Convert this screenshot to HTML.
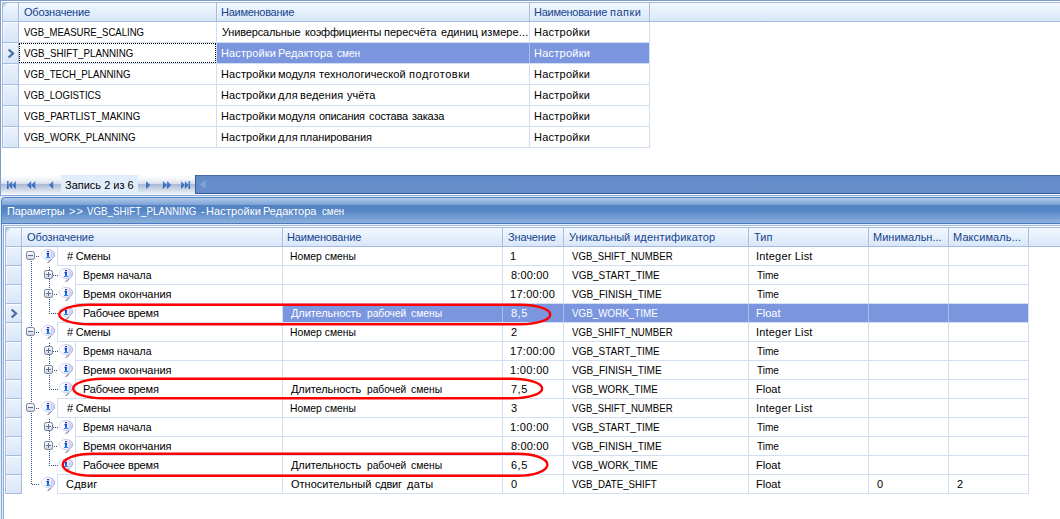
<!DOCTYPE html>
<html lang="ru"><head><meta charset="utf-8"><title>Параметры</title>
<style>
html,body{margin:0;padding:0;background:#fff}
body{width:1060px;height:519px;position:relative;overflow:hidden;font:11px/13px "Liberation Sans",sans-serif}
body>div,body>span,body>svg{position:absolute;display:block}
.t{white-space:nowrap;height:13px;transform-origin:0 0}
</style></head><body>
<div style="left:0px;top:0px;width:1px;height:196px;background:#7f9dc8;"></div>
<div style="left:0px;top:0px;width:1060px;height:1px;background:#7f9dc8;"></div>
<div style="left:0px;top:195px;width:1060px;height:1px;background:#8aa6d2;"></div>
<div style="left:2px;top:2px;width:1058px;height:1px;background:#a3bcdf;"></div>
<div style="left:2px;top:2px;width:1px;height:146px;background:#a3bcdf;"></div>
<div style="left:3px;top:3px;width:1057px;height:18px;background:linear-gradient(#f3f8fe 0%,#e6f0fc 45%,#d9e7fa 100%);"></div>
<div style="left:2px;top:21px;width:1058px;height:1px;background:#a3bcdf;"></div>
<div style="left:18px;top:3px;width:1px;height:18px;background:#a3bcdf;"></div>
<div style="left:19px;top:3px;width:1px;height:18px;background:rgba(255,255,255,.3);"></div>
<div style="left:216px;top:3px;width:1px;height:18px;background:#a3bcdf;"></div>
<div style="left:217px;top:3px;width:1px;height:18px;background:rgba(255,255,255,.3);"></div>
<div style="left:529px;top:3px;width:1px;height:18px;background:#a3bcdf;"></div>
<div style="left:530px;top:3px;width:1px;height:18px;background:rgba(255,255,255,.3);"></div>
<div style="left:649px;top:3px;width:1px;height:18px;background:#a3bcdf;"></div>
<div style="left:650px;top:3px;width:1px;height:18px;background:rgba(255,255,255,.3);"></div>
<div style="left:3px;top:3px;width:5px;height:5px;background:linear-gradient(135deg,#9db6dc 0%,rgba(157,182,220,0) 65%)"></div>
<div style="left:3px;top:22px;width:15px;height:20px;background:linear-gradient(#eaf2fc,#d9e6f8);box-shadow:inset 1px 1px 0 rgba(255,255,255,.6)"></div>
<div style="left:3px;top:42px;width:16px;height:1px;background:#a3bcdf;"></div>
<div style="left:19px;top:42px;width:631px;height:1px;background:#d2dff2;"></div>
<div style="left:3px;top:43px;width:15px;height:20px;background:linear-gradient(#eaf2fc,#d9e6f8);box-shadow:inset 1px 1px 0 rgba(255,255,255,.6)"></div>
<div style="left:3px;top:63px;width:16px;height:1px;background:#a3bcdf;"></div>
<div style="left:19px;top:63px;width:631px;height:1px;background:#d2dff2;"></div>
<div style="left:3px;top:64px;width:15px;height:20px;background:linear-gradient(#eaf2fc,#d9e6f8);box-shadow:inset 1px 1px 0 rgba(255,255,255,.6)"></div>
<div style="left:3px;top:84px;width:16px;height:1px;background:#a3bcdf;"></div>
<div style="left:19px;top:84px;width:631px;height:1px;background:#d2dff2;"></div>
<div style="left:3px;top:85px;width:15px;height:20px;background:linear-gradient(#eaf2fc,#d9e6f8);box-shadow:inset 1px 1px 0 rgba(255,255,255,.6)"></div>
<div style="left:3px;top:105px;width:16px;height:1px;background:#a3bcdf;"></div>
<div style="left:19px;top:105px;width:631px;height:1px;background:#d2dff2;"></div>
<div style="left:3px;top:106px;width:15px;height:20px;background:linear-gradient(#eaf2fc,#d9e6f8);box-shadow:inset 1px 1px 0 rgba(255,255,255,.6)"></div>
<div style="left:3px;top:126px;width:16px;height:1px;background:#a3bcdf;"></div>
<div style="left:19px;top:126px;width:631px;height:1px;background:#d2dff2;"></div>
<div style="left:3px;top:127px;width:15px;height:20px;background:linear-gradient(#eaf2fc,#d9e6f8);box-shadow:inset 1px 1px 0 rgba(255,255,255,.6)"></div>
<div style="left:3px;top:147px;width:16px;height:1px;background:#a3bcdf;"></div>
<div style="left:19px;top:147px;width:631px;height:1px;background:#d2dff2;"></div>
<div style="left:18px;top:22px;width:1px;height:126px;background:#a3bcdf;"></div>
<div style="left:216px;top:22px;width:1px;height:126px;background:#d2dff2;"></div>
<div style="left:529px;top:22px;width:1px;height:126px;background:#d2dff2;"></div>
<div style="left:649px;top:22px;width:1px;height:126px;background:#d2dff2;"></div>
<div style="left:217px;top:43px;width:432px;height:20px;background:#7b96df;"></div>
<div style="left:529px;top:43px;width:1px;height:20px;background:#aebdea;"></div>
<div style="left:19px;top:43px;width:197px;height:20px;box-sizing:border-box;border:1px dotted #000"></div>
<svg style="left:7px;top:48px" width="9" height="11" viewBox="0 0 9 11"><path d="M1.6 1.5 L6 5.5 L1.6 9.5" fill="none" stroke="#4a6da8" stroke-width="2.3"/></svg>
<span id="t1" class="t" style="left:24.00px;top:6px;color:#15428b;letter-spacing:-0.200px;">Обозначение</span>
<span id="t2" class="t" style="left:221.00px;top:6px;color:#15428b;letter-spacing:-0.273px;">Наименование</span>
<span id="t3" class="t" style="left:534.00px;top:6px;color:#15428b;letter-spacing:-0.273px;">Наименование</span>
<span id="t4" class="t" style="left:610.00px;top:6px;color:#15428b;letter-spacing:0.500px;">папки</span>
<span id="t5" class="t" style="left:24.00px;top:26px;color:#000;transform:scaleX(0.8686);">VGB_MEASURE_SCALING</span>
<span id="t6" class="t" style="left:222.00px;top:26px;color:#000;letter-spacing:-0.167px;">Универсальные</span>
<span id="t7" class="t" style="left:305.00px;top:26px;color:#000;letter-spacing:-0.182px;">коэффициенты</span>
<span id="t8" class="t" style="left:384.00px;top:26px;color:#000;">пересчёта</span>
<span id="t9" class="t" style="left:441.00px;top:26px;color:#000;">единиц</span>
<span id="t10" class="t" style="left:481.00px;top:26px;color:#000;letter-spacing:0.125px;">измере...</span>
<span id="t11" class="t" style="left:534.00px;top:26px;color:#000;letter-spacing:0.250px;">Настройки</span>
<span id="t12" class="t" style="left:24.00px;top:47px;color:#000;transform:scaleX(0.8852);">VGB_SHIFT_PLANNING</span>
<span id="t13" class="t" style="left:221.00px;top:47px;color:#fff;letter-spacing:0.125px;">Настройки</span>
<span id="t14" class="t" style="left:278.00px;top:47px;color:#fff;letter-spacing:0.125px;">Редактора</span>
<span id="t15" class="t" style="left:337.00px;top:47px;color:#fff;transform:scaleX(0.9167);">смен</span>
<span id="t16" class="t" style="left:534.00px;top:47px;color:#fff;letter-spacing:0.250px;">Настройки</span>
<span id="t17" class="t" style="left:24.00px;top:68px;color:#000;transform:scaleX(0.8750);">VGB_TECH_PLANNING</span>
<span id="t18" class="t" style="left:221.00px;top:68px;color:#000;letter-spacing:0.125px;">Настройки</span>
<span id="t19" class="t" style="left:278.00px;top:68px;color:#000;">модуля</span>
<span id="t20" class="t" style="left:319.00px;top:68px;color:#000;letter-spacing:0.071px;">технологической</span>
<span id="t21" class="t" style="left:409.00px;top:68px;color:#000;letter-spacing:0.556px;">подготовки</span>
<span id="t22" class="t" style="left:534.00px;top:68px;color:#000;letter-spacing:0.250px;">Настройки</span>
<span id="t23" class="t" style="left:24.00px;top:89px;color:#000;transform:scaleX(0.8736);">VGB_LOGISTICS</span>
<span id="t24" class="t" style="left:221.00px;top:89px;color:#000;letter-spacing:0.125px;">Настройки</span>
<span id="t25" class="t" style="left:278.00px;top:89px;color:#000;letter-spacing:0.500px;">для</span>
<span id="t26" class="t" style="left:300.00px;top:89px;color:#000;letter-spacing:0.167px;">ведения</span>
<span id="t27" class="t" style="left:347.00px;top:89px;color:#000;">учёта</span>
<span id="t28" class="t" style="left:534.00px;top:89px;color:#000;letter-spacing:0.250px;">Настройки</span>
<span id="t29" class="t" style="left:24.00px;top:110px;color:#000;transform:scaleX(0.8915);">VGB_PARTLIST_MAKING</span>
<span id="t30" class="t" style="left:221.00px;top:110px;color:#000;letter-spacing:0.125px;">Настройки</span>
<span id="t31" class="t" style="left:278.00px;top:110px;color:#000;">модуля</span>
<span id="t32" class="t" style="left:319.00px;top:110px;color:#000;letter-spacing:-0.286px;">описания</span>
<span id="t33" class="t" style="left:369.00px;top:110px;color:#000;letter-spacing:-0.167px;">состава</span>
<span id="t34" class="t" style="left:412.00px;top:110px;color:#000;letter-spacing:-0.200px;">заказа</span>
<span id="t35" class="t" style="left:534.00px;top:110px;color:#000;letter-spacing:0.250px;">Настройки</span>
<span id="t36" class="t" style="left:24.00px;top:131px;color:#000;transform:scaleX(0.8871);">VGB_WORK_PLANNING</span>
<span id="t37" class="t" style="left:221.00px;top:131px;color:#000;letter-spacing:0.125px;">Настройки</span>
<span id="t38" class="t" style="left:278.00px;top:131px;color:#000;letter-spacing:0.500px;">для</span>
<span id="t39" class="t" style="left:300.00px;top:131px;color:#000;letter-spacing:-0.091px;">планирования</span>
<span id="t40" class="t" style="left:534.00px;top:131px;color:#000;letter-spacing:0.250px;">Настройки</span>
<div style="left:1px;top:175px;width:194px;height:19px;background:linear-gradient(#ffffff 0px,#f3f5fa 4px,#dde3ef 8px,#d3dbe9 9px,#a9bbd6 9px,#b3c2d9 11px,#d2dae8 15px,#f0f3f8 19px);"></div>
<div style="left:61px;top:175px;width:77px;height:19px;background:#e2edfb;"></div>
<span id="t41" class="t" style="left:65.00px;top:179px;color:#000;">Запись 2 из 6</span>
<svg style="left:6px;top:180px" width="12" height="10" viewBox="0 0 12 10" fill="url(#ng)"><defs><linearGradient id="ng" x1="0" y1="0" x2="0" y2="1"><stop offset="0" stop-color="#5589d2"/><stop offset="1" stop-color="#2c5fae"/></linearGradient></defs><rect x="1" y="1" width="1.6" height="8"/><path d="M6.1 1 L2.4 5 L6.1 9Z"/><path d="M9.9 1 L6.1 5 L9.9 9Z"/></svg>
<svg style="left:26px;top:180px" width="12" height="10" viewBox="0 0 12 10" fill="url(#ng)"><defs><linearGradient id="ng" x1="0" y1="0" x2="0" y2="1"><stop offset="0" stop-color="#5589d2"/><stop offset="1" stop-color="#2c5fae"/></linearGradient></defs><path d="M5.2 1 L1 5 L5.2 9Z"/><path d="M9.3 1 L5.1 5 L9.3 9Z"/></svg>
<svg style="left:47px;top:180px" width="12" height="10" viewBox="0 0 12 10" fill="url(#ng)"><defs><linearGradient id="ng" x1="0" y1="0" x2="0" y2="1"><stop offset="0" stop-color="#5589d2"/><stop offset="1" stop-color="#2c5fae"/></linearGradient></defs><path d="M6.2 1 L1.9 5 L6.2 9Z"/></svg>
<svg style="left:144px;top:180px" width="12" height="10" viewBox="0 0 12 10" fill="url(#ng)"><defs><linearGradient id="ng" x1="0" y1="0" x2="0" y2="1"><stop offset="0" stop-color="#5589d2"/><stop offset="1" stop-color="#2c5fae"/></linearGradient></defs><path d="M2 1 L6.3 5 L2 9Z"/></svg>
<svg style="left:161px;top:180px" width="12" height="10" viewBox="0 0 12 10" fill="url(#ng)"><defs><linearGradient id="ng" x1="0" y1="0" x2="0" y2="1"><stop offset="0" stop-color="#5589d2"/><stop offset="1" stop-color="#2c5fae"/></linearGradient></defs><path d="M1.9 1 L6.1 5 L1.9 9Z"/><path d="M6 1 L10.2 5 L6 9Z"/></svg>
<svg style="left:179px;top:180px" width="12" height="10" viewBox="0 0 12 10" fill="url(#ng)"><defs><linearGradient id="ng" x1="0" y1="0" x2="0" y2="1"><stop offset="0" stop-color="#5589d2"/><stop offset="1" stop-color="#2c5fae"/></linearGradient></defs><path d="M2.1 1 L5.9 5 L2.1 9Z"/><path d="M5.9 1 L9.6 5 L5.9 9Z"/><rect x="9.5" y="1" width="1.6" height="8"/></svg>
<div style="left:195px;top:175px;width:865px;height:19px;background:linear-gradient(#5d88c5,#668ec9 40%,#648cc8);"></div>
<div style="left:195px;top:175px;width:865px;height:1px;background:#4169ab;"></div>
<div style="left:195px;top:175px;width:1px;height:19px;background:#325a9c;"></div>
<div style="left:195px;top:193px;width:865px;height:1px;background:#325a9c;"></div>
<svg style="left:199px;top:179px" width="8" height="11" viewBox="0 0 8 11"><path d="M6.6 1 L1 5.5 L6.6 10Z" fill="#82a3d5"/></svg>
<div style="left:0px;top:196px;width:1060px;height:1px;background:#e0eaf8;"></div>
<div style="left:1px;top:197px;width:1059px;height:27px;background:linear-gradient(#b1c9e8 0px,#7aa1d6 7px,#5182c3 7px,#5786c6 13px,#8db1dd 25px,#4a7cc0 25px,#4a7cc0 26px);box-sizing:border-box;border-left:1px solid #4f81c5;border-top:1px solid #4f81c5;border-top-left-radius:4px"></div>
<div style="left:0px;top:196px;width:1px;height:323px;background:#e0eaf8;"></div>
<div style="left:1px;top:224px;width:1px;height:295px;background:linear-gradient(#5f8ecd,#8fb0dc);"></div>
<span id="t42" class="t" style="left:7.00px;top:205px;color:#fff;letter-spacing:-0.125px;">Параметры</span>
<span id="t43" class="t" style="left:69.00px;top:205px;color:#fff;letter-spacing:1.000px;">&gt;&gt;</span>
<span id="t44" class="t" style="left:87.00px;top:205px;color:#fff;transform:scaleX(0.8852);">VGB_SHIFT_PLANNING</span>
<span id="t45" class="t" style="left:201.00px;top:205px;color:#fff;">-</span>
<span id="t46" class="t" style="left:206.00px;top:205px;color:#fff;letter-spacing:0.125px;">Настройки</span>
<span id="t47" class="t" style="left:263.00px;top:205px;color:#fff;">Редактора</span>
<span id="t48" class="t" style="left:322.00px;top:205px;color:#fff;transform:scaleX(0.8750);">смен</span>
<div style="left:2px;top:224px;width:1px;height:295px;background:#dde8f8;"></div>
<div style="left:2px;top:224px;width:1058px;height:1px;background:#e4edfa;"></div>
<div style="left:3px;top:225px;width:1057px;height:1px;background:#a3bcdf;"></div>
<div style="left:3px;top:225px;width:1px;height:294px;background:#93abd0;"></div>
<div style="left:5px;top:227px;width:1055px;height:1px;background:#a3bcdf;"></div>
<div style="left:5px;top:227px;width:1px;height:267px;background:#a3bcdf;"></div>
<div style="left:6px;top:228px;width:1054px;height:18px;background:linear-gradient(#f3f8fe 0%,#e6f0fc 45%,#d9e7fa 100%);"></div>
<div style="left:5px;top:246px;width:1055px;height:1px;background:#a3bcdf;"></div>
<div style="left:21px;top:228px;width:1px;height:18px;background:#a3bcdf;"></div>
<div style="left:22px;top:228px;width:1px;height:18px;background:rgba(255,255,255,.3);"></div>
<div style="left:282px;top:228px;width:1px;height:18px;background:#a3bcdf;"></div>
<div style="left:283px;top:228px;width:1px;height:18px;background:rgba(255,255,255,.3);"></div>
<div style="left:502px;top:228px;width:1px;height:18px;background:#a3bcdf;"></div>
<div style="left:503px;top:228px;width:1px;height:18px;background:rgba(255,255,255,.3);"></div>
<div style="left:563px;top:228px;width:1px;height:18px;background:#a3bcdf;"></div>
<div style="left:564px;top:228px;width:1px;height:18px;background:rgba(255,255,255,.3);"></div>
<div style="left:748px;top:228px;width:1px;height:18px;background:#a3bcdf;"></div>
<div style="left:749px;top:228px;width:1px;height:18px;background:rgba(255,255,255,.3);"></div>
<div style="left:868px;top:228px;width:1px;height:18px;background:#a3bcdf;"></div>
<div style="left:869px;top:228px;width:1px;height:18px;background:rgba(255,255,255,.3);"></div>
<div style="left:948px;top:228px;width:1px;height:18px;background:#a3bcdf;"></div>
<div style="left:949px;top:228px;width:1px;height:18px;background:rgba(255,255,255,.3);"></div>
<div style="left:1028px;top:228px;width:1px;height:18px;background:#a3bcdf;"></div>
<div style="left:1029px;top:228px;width:1px;height:18px;background:rgba(255,255,255,.3);"></div>
<div style="left:6px;top:228px;width:5px;height:5px;background:linear-gradient(135deg,#9db6dc 0%,rgba(157,182,220,0) 65%)"></div>
<div style="left:6px;top:247px;width:15px;height:18px;background:linear-gradient(#eaf2fc,#d9e6f8);box-shadow:inset 1px 1px 0 rgba(255,255,255,.6)"></div>
<div style="left:6px;top:265px;width:16px;height:1px;background:#a3bcdf;"></div>
<div style="left:6px;top:266px;width:15px;height:18px;background:linear-gradient(#eaf2fc,#d9e6f8);box-shadow:inset 1px 1px 0 rgba(255,255,255,.6)"></div>
<div style="left:6px;top:284px;width:16px;height:1px;background:#a3bcdf;"></div>
<div style="left:6px;top:285px;width:15px;height:18px;background:linear-gradient(#eaf2fc,#d9e6f8);box-shadow:inset 1px 1px 0 rgba(255,255,255,.6)"></div>
<div style="left:6px;top:303px;width:16px;height:1px;background:#a3bcdf;"></div>
<div style="left:6px;top:304px;width:15px;height:18px;background:linear-gradient(#eaf2fc,#d9e6f8);box-shadow:inset 1px 1px 0 rgba(255,255,255,.6)"></div>
<div style="left:6px;top:322px;width:16px;height:1px;background:#a3bcdf;"></div>
<div style="left:6px;top:323px;width:15px;height:18px;background:linear-gradient(#eaf2fc,#d9e6f8);box-shadow:inset 1px 1px 0 rgba(255,255,255,.6)"></div>
<div style="left:6px;top:341px;width:16px;height:1px;background:#a3bcdf;"></div>
<div style="left:6px;top:342px;width:15px;height:18px;background:linear-gradient(#eaf2fc,#d9e6f8);box-shadow:inset 1px 1px 0 rgba(255,255,255,.6)"></div>
<div style="left:6px;top:360px;width:16px;height:1px;background:#a3bcdf;"></div>
<div style="left:6px;top:361px;width:15px;height:18px;background:linear-gradient(#eaf2fc,#d9e6f8);box-shadow:inset 1px 1px 0 rgba(255,255,255,.6)"></div>
<div style="left:6px;top:379px;width:16px;height:1px;background:#a3bcdf;"></div>
<div style="left:6px;top:380px;width:15px;height:18px;background:linear-gradient(#eaf2fc,#d9e6f8);box-shadow:inset 1px 1px 0 rgba(255,255,255,.6)"></div>
<div style="left:6px;top:398px;width:16px;height:1px;background:#a3bcdf;"></div>
<div style="left:6px;top:399px;width:15px;height:18px;background:linear-gradient(#eaf2fc,#d9e6f8);box-shadow:inset 1px 1px 0 rgba(255,255,255,.6)"></div>
<div style="left:6px;top:417px;width:16px;height:1px;background:#a3bcdf;"></div>
<div style="left:6px;top:418px;width:15px;height:18px;background:linear-gradient(#eaf2fc,#d9e6f8);box-shadow:inset 1px 1px 0 rgba(255,255,255,.6)"></div>
<div style="left:6px;top:436px;width:16px;height:1px;background:#a3bcdf;"></div>
<div style="left:6px;top:437px;width:15px;height:18px;background:linear-gradient(#eaf2fc,#d9e6f8);box-shadow:inset 1px 1px 0 rgba(255,255,255,.6)"></div>
<div style="left:6px;top:455px;width:16px;height:1px;background:#a3bcdf;"></div>
<div style="left:6px;top:456px;width:15px;height:18px;background:linear-gradient(#eaf2fc,#d9e6f8);box-shadow:inset 1px 1px 0 rgba(255,255,255,.6)"></div>
<div style="left:6px;top:474px;width:16px;height:1px;background:#a3bcdf;"></div>
<div style="left:6px;top:475px;width:15px;height:18px;background:linear-gradient(#eaf2fc,#d9e6f8);box-shadow:inset 1px 1px 0 rgba(255,255,255,.6)"></div>
<div style="left:6px;top:493px;width:16px;height:1px;background:#a3bcdf;"></div>
<div style="left:21px;top:247px;width:1px;height:247px;background:#a3bcdf;"></div>
<div style="left:57px;top:265px;width:972px;height:1px;background:#d2dff2;"></div>
<div style="left:57px;top:247px;width:1px;height:19px;background:#d2dff2;"></div>
<div style="left:75px;top:284px;width:954px;height:1px;background:#d2dff2;"></div>
<div style="left:75px;top:265px;width:1px;height:20px;background:#d2dff2;"></div>
<div style="left:75px;top:303px;width:954px;height:1px;background:#d2dff2;"></div>
<div style="left:75px;top:284px;width:1px;height:20px;background:#d2dff2;"></div>
<div style="left:57px;top:322px;width:972px;height:1px;background:#d2dff2;"></div>
<div style="left:75px;top:303px;width:1px;height:20px;background:#d2dff2;"></div>
<div style="left:57px;top:341px;width:972px;height:1px;background:#d2dff2;"></div>
<div style="left:57px;top:322px;width:1px;height:20px;background:#d2dff2;"></div>
<div style="left:75px;top:360px;width:954px;height:1px;background:#d2dff2;"></div>
<div style="left:75px;top:341px;width:1px;height:20px;background:#d2dff2;"></div>
<div style="left:75px;top:379px;width:954px;height:1px;background:#d2dff2;"></div>
<div style="left:75px;top:360px;width:1px;height:20px;background:#d2dff2;"></div>
<div style="left:57px;top:398px;width:972px;height:1px;background:#d2dff2;"></div>
<div style="left:75px;top:379px;width:1px;height:20px;background:#d2dff2;"></div>
<div style="left:57px;top:417px;width:972px;height:1px;background:#d2dff2;"></div>
<div style="left:57px;top:398px;width:1px;height:20px;background:#d2dff2;"></div>
<div style="left:75px;top:436px;width:954px;height:1px;background:#d2dff2;"></div>
<div style="left:75px;top:417px;width:1px;height:20px;background:#d2dff2;"></div>
<div style="left:75px;top:455px;width:954px;height:1px;background:#d2dff2;"></div>
<div style="left:75px;top:436px;width:1px;height:20px;background:#d2dff2;"></div>
<div style="left:57px;top:474px;width:972px;height:1px;background:#d2dff2;"></div>
<div style="left:75px;top:455px;width:1px;height:20px;background:#d2dff2;"></div>
<div style="left:57px;top:493px;width:972px;height:1px;background:#d2dff2;"></div>
<div style="left:57px;top:474px;width:1px;height:20px;background:#d2dff2;"></div>
<div style="left:282px;top:247px;width:1px;height:247px;background:#d2dff2;"></div>
<div style="left:502px;top:247px;width:1px;height:247px;background:#d2dff2;"></div>
<div style="left:563px;top:247px;width:1px;height:247px;background:#d2dff2;"></div>
<div style="left:748px;top:247px;width:1px;height:247px;background:#d2dff2;"></div>
<div style="left:868px;top:247px;width:1px;height:247px;background:#d2dff2;"></div>
<div style="left:948px;top:247px;width:1px;height:247px;background:#d2dff2;"></div>
<div style="left:1028px;top:247px;width:1px;height:247px;background:#d2dff2;"></div>
<div style="left:283px;top:304px;width:745px;height:18px;background:#7b96df;"></div>
<div style="left:502px;top:304px;width:1px;height:18px;background:#aebdea;"></div>
<div style="left:563px;top:304px;width:1px;height:18px;background:#aebdea;"></div>
<div style="left:748px;top:304px;width:1px;height:18px;background:#aebdea;"></div>
<div style="left:868px;top:304px;width:1px;height:18px;background:#aebdea;"></div>
<div style="left:948px;top:304px;width:1px;height:18px;background:#aebdea;"></div>
<svg style="left:10px;top:308px" width="9" height="11" viewBox="0 0 9 11"><path d="M1.6 1.5 L6 5.5 L1.6 9.5" fill="none" stroke="#4a6da8" stroke-width="2.3"/></svg>
<span id="t49" class="t" style="left:27.00px;top:231px;color:#15428b;letter-spacing:-0.100px;">Обозначение</span>
<span id="t50" class="t" style="left:287.00px;top:231px;color:#15428b;letter-spacing:-0.182px;">Наименование</span>
<span id="t51" class="t" style="left:508.00px;top:231px;color:#15428b;letter-spacing:-0.143px;">Значение</span>
<span id="t52" class="t" style="left:569.00px;top:231px;color:#15428b;letter-spacing:-0.111px;">Уникальный</span>
<span id="t53" class="t" style="left:634.00px;top:231px;color:#15428b;letter-spacing:0.167px;">идентификатор</span>
<span id="t54" class="t" style="left:754.00px;top:231px;color:#15428b;">Тип</span>
<span id="t55" class="t" style="left:873.00px;top:231px;color:#15428b;">Минимальн...</span>
<span id="t56" class="t" style="left:953.00px;top:231px;color:#15428b;letter-spacing:0.091px;">Максималь...</span>
<span id="t57" class="t" style="left:67.00px;top:250px;color:#000;letter-spacing:-0.167px;"># Смены</span>
<span id="t58" class="t" style="left:290.00px;top:250px;color:#000;transform:scaleX(0.9412);">Номер смены</span>
<span id="t59" class="t" style="left:510.00px;top:250px;color:#000;">1</span>
<span id="t60" class="t" style="left:572.00px;top:250px;color:#000;transform:scaleX(0.8761);">VGB_SHIFT_NUMBER</span>
<span id="t61" class="t" style="left:756.00px;top:250px;color:#000;letter-spacing:0.182px;">Integer List</span>
<span id="t62" class="t" style="left:83.00px;top:269px;color:#000;transform:scaleX(0.9437);">Время начала</span>
<span id="t63" class="t" style="left:511.00px;top:269px;color:#000;letter-spacing:0.167px;">8:00:00</span>
<span id="t64" class="t" style="left:572.00px;top:269px;color:#000;transform:scaleX(0.9064);">VGB_START_TIME</span>
<span id="t65" class="t" style="left:757.00px;top:269px;color:#000;transform:scaleX(0.9130);">Time</span>
<span id="t66" class="t" style="left:83.00px;top:288px;color:#000;letter-spacing:-0.071px;">Время окончания</span>
<span id="t67" class="t" style="left:510.00px;top:288px;color:#000;letter-spacing:0.286px;">17:00:00</span>
<span id="t68" class="t" style="left:572.00px;top:288px;color:#000;transform:scaleX(0.9178);">VGB_FINISH_TIME</span>
<span id="t69" class="t" style="left:757.00px;top:288px;color:#000;transform:scaleX(0.9130);">Time</span>
<span id="t70" class="t" style="left:83.00px;top:307px;color:#000;letter-spacing:-0.167px;">Рабочее время</span>
<span id="t71" class="t" style="left:291.00px;top:307px;color:#fff;letter-spacing:-0.091px;">Длительность</span>
<span id="t72" class="t" style="left:367.00px;top:307px;color:#fff;transform:scaleX(0.9268);">рабочей</span>
<span id="t73" class="t" style="left:411.00px;top:307px;color:#fff;transform:scaleX(0.9375);">смены</span>
<span id="t74" class="t" style="left:511.00px;top:307px;color:#fff;letter-spacing:0.500px;">8,5</span>
<span id="t75" class="t" style="left:572.00px;top:307px;color:#fff;transform:scaleX(0.8947);">VGB_WORK_TIME</span>
<span id="t76" class="t" style="left:756.00px;top:307px;color:#fff;">Float</span>
<span id="t77" class="t" style="left:67.00px;top:326px;color:#000;letter-spacing:-0.167px;"># Смены</span>
<span id="t78" class="t" style="left:290.00px;top:326px;color:#000;transform:scaleX(0.9412);">Номер смены</span>
<span id="t79" class="t" style="left:511.00px;top:326px;color:#000;">2</span>
<span id="t80" class="t" style="left:572.00px;top:326px;color:#000;transform:scaleX(0.8761);">VGB_SHIFT_NUMBER</span>
<span id="t81" class="t" style="left:756.00px;top:326px;color:#000;letter-spacing:0.182px;">Integer List</span>
<span id="t82" class="t" style="left:83.00px;top:345px;color:#000;transform:scaleX(0.9437);">Время начала</span>
<span id="t83" class="t" style="left:510.00px;top:345px;color:#000;letter-spacing:0.286px;">17:00:00</span>
<span id="t84" class="t" style="left:572.00px;top:345px;color:#000;transform:scaleX(0.9064);">VGB_START_TIME</span>
<span id="t85" class="t" style="left:757.00px;top:345px;color:#000;transform:scaleX(0.9130);">Time</span>
<span id="t86" class="t" style="left:83.00px;top:364px;color:#000;letter-spacing:-0.071px;">Время окончания</span>
<span id="t87" class="t" style="left:510.00px;top:364px;color:#000;letter-spacing:0.333px;">1:00:00</span>
<span id="t88" class="t" style="left:572.00px;top:364px;color:#000;transform:scaleX(0.9178);">VGB_FINISH_TIME</span>
<span id="t89" class="t" style="left:757.00px;top:364px;color:#000;transform:scaleX(0.9130);">Time</span>
<span id="t90" class="t" style="left:83.00px;top:383px;color:#000;letter-spacing:-0.167px;">Рабочее время</span>
<span id="t91" class="t" style="left:291.00px;top:383px;color:#000;letter-spacing:-0.091px;">Длительность</span>
<span id="t92" class="t" style="left:367.00px;top:383px;color:#000;transform:scaleX(0.9268);">рабочей</span>
<span id="t93" class="t" style="left:411.00px;top:383px;color:#000;transform:scaleX(0.9375);">смены</span>
<span id="t94" class="t" style="left:511.00px;top:383px;color:#000;letter-spacing:0.500px;">7,5</span>
<span id="t95" class="t" style="left:572.00px;top:383px;color:#000;transform:scaleX(0.8947);">VGB_WORK_TIME</span>
<span id="t96" class="t" style="left:756.00px;top:383px;color:#000;">Float</span>
<span id="t97" class="t" style="left:67.00px;top:402px;color:#000;letter-spacing:-0.167px;"># Смены</span>
<span id="t98" class="t" style="left:290.00px;top:402px;color:#000;transform:scaleX(0.9412);">Номер смены</span>
<span id="t99" class="t" style="left:511.00px;top:402px;color:#000;">3</span>
<span id="t100" class="t" style="left:572.00px;top:402px;color:#000;transform:scaleX(0.8761);">VGB_SHIFT_NUMBER</span>
<span id="t101" class="t" style="left:756.00px;top:402px;color:#000;letter-spacing:0.182px;">Integer List</span>
<span id="t102" class="t" style="left:83.00px;top:421px;color:#000;transform:scaleX(0.9437);">Время начала</span>
<span id="t103" class="t" style="left:510.00px;top:421px;color:#000;letter-spacing:0.333px;">1:00:00</span>
<span id="t104" class="t" style="left:572.00px;top:421px;color:#000;transform:scaleX(0.9064);">VGB_START_TIME</span>
<span id="t105" class="t" style="left:757.00px;top:421px;color:#000;transform:scaleX(0.9130);">Time</span>
<span id="t106" class="t" style="left:83.00px;top:440px;color:#000;letter-spacing:-0.071px;">Время окончания</span>
<span id="t107" class="t" style="left:511.00px;top:440px;color:#000;letter-spacing:0.167px;">8:00:00</span>
<span id="t108" class="t" style="left:572.00px;top:440px;color:#000;transform:scaleX(0.9178);">VGB_FINISH_TIME</span>
<span id="t109" class="t" style="left:757.00px;top:440px;color:#000;transform:scaleX(0.9130);">Time</span>
<span id="t110" class="t" style="left:83.00px;top:459px;color:#000;letter-spacing:-0.167px;">Рабочее время</span>
<span id="t111" class="t" style="left:291.00px;top:459px;color:#000;letter-spacing:-0.091px;">Длительность</span>
<span id="t112" class="t" style="left:367.00px;top:459px;color:#000;transform:scaleX(0.9268);">рабочей</span>
<span id="t113" class="t" style="left:411.00px;top:459px;color:#000;transform:scaleX(0.9375);">смены</span>
<span id="t114" class="t" style="left:511.00px;top:459px;color:#000;letter-spacing:0.500px;">6,5</span>
<span id="t115" class="t" style="left:572.00px;top:459px;color:#000;transform:scaleX(0.8947);">VGB_WORK_TIME</span>
<span id="t116" class="t" style="left:756.00px;top:459px;color:#000;">Float</span>
<span id="t117" class="t" style="left:66.00px;top:478px;color:#000;letter-spacing:0.250px;">Сдвиг</span>
<span id="t118" class="t" style="left:291.00px;top:478px;color:#000;">Относительный</span>
<span id="t119" class="t" style="left:375.00px;top:478px;color:#000;letter-spacing:-0.250px;">сдвиг</span>
<span id="t120" class="t" style="left:407.00px;top:478px;color:#000;letter-spacing:0.333px;">даты</span>
<span id="t121" class="t" style="left:511.00px;top:478px;color:#000;">0</span>
<span id="t122" class="t" style="left:572.00px;top:478px;color:#000;transform:scaleX(0.8842);">VGB_DATE_SHIFT</span>
<span id="t123" class="t" style="left:756.00px;top:478px;color:#000;">Float</span>
<span id="t124" class="t" style="left:877.00px;top:478px;color:#000;">0</span>
<span id="t125" class="t" style="left:957.00px;top:478px;color:#000;">2</span>
<svg style="left:0;top:0" width="1060" height="519" viewBox="0 0 1060 519">
<defs>
<linearGradient id="bg" x1="0" y1="0" x2="0" y2="1"><stop offset="0" stop-color="#ffffff"/><stop offset="1" stop-color="#ccd4e4"/></linearGradient>
<linearGradient id="ig" x1="0" y1="0" x2="0" y2="1"><stop offset="0" stop-color="#1438c8"/><stop offset="1" stop-color="#2a96f4"/></linearGradient>
<linearGradient id="bst" x1="0" y1="0" x2="1" y2="0"><stop offset="0" stop-color="#d2d2ee"/><stop offset=".6" stop-color="#c2c2e4"/><stop offset="1" stop-color="#a2a2c6"/></linearGradient>
<linearGradient id="bub" x1="0" y1="0" x2="1" y2="0"><stop offset="0" stop-color="#ffffff"/><stop offset=".55" stop-color="#f4f4fe"/><stop offset="1" stop-color="#cfcff4"/></linearGradient>
<g id="ico">
 <path d="M7 .5 C10.8 .5 13.5 2.7 13.5 5.4 C13.5 7.7 11.9 9.6 10.3 10.4 C9.9 11.8 8.8 13.1 7 13.5 C7.9 12.5 8.2 11.4 7.9 10.5 C3.6 10.7 .5 8.4 .5 5.5 C.5 2.7 3.2 .5 7 .5Z" fill="url(#bub)" stroke="url(#bst)" stroke-width=".9"/>
 <path d="M9.8 1.8 C11.6 3.2 12 6.4 10.4 9.4 C9.8 10.9 9 12.2 7.8 12.9 C8.8 11.5 9 10.1 8.7 9.5 C10.1 7.7 10.6 4.4 9.8 1.8Z" fill="#c8c8f2" opacity=".8"/>
 <path d="M6.9 13.5 C8.1 13.1 9.2 12.2 9.8 11.2" fill="none" stroke="#6e6e80" stroke-width=".8" stroke-linecap="round"/>
 <rect x="6" y="2" width="2" height="1.3" fill="#1636c0"/>
 <rect x="5" y="4.2" width="1" height=".9" fill="#5a86e6"/>
 <path d="M6 4 H8 V8 H9 V9 H5 V8 H6Z" fill="url(#ig)"/>
</g>
<g id="bm"><rect x=".5" y=".5" width="8" height="8" rx="1.8" fill="url(#bg)" stroke="#75829e"/><rect x="2" y="4" width="5" height="1" fill="#5e6e8e"/></g>
<g id="bp"><rect x=".5" y=".5" width="8" height="8" rx="1.8" fill="url(#bg)" stroke="#75829e"/><rect x="2" y="4" width="5" height="1" fill="#5e6e8e"/><rect x="4" y="2" width="1" height="5" fill="#5e6e8e"/></g>
</defs>
<use href="#bm" x="26" y="251"/>
<use href="#ico" x="41" y="249"/>
<use href="#bp" x="44" y="270"/>
<use href="#ico" x="59" y="268"/>
<use href="#bp" x="44" y="289"/>
<use href="#ico" x="59" y="287"/>
<use href="#ico" x="59" y="306"/>
<use href="#bm" x="26" y="327"/>
<use href="#ico" x="41" y="325"/>
<use href="#bp" x="44" y="346"/>
<use href="#ico" x="59" y="344"/>
<use href="#bp" x="44" y="365"/>
<use href="#ico" x="59" y="363"/>
<use href="#ico" x="59" y="382"/>
<use href="#bm" x="26" y="403"/>
<use href="#ico" x="41" y="401"/>
<use href="#bp" x="44" y="422"/>
<use href="#ico" x="59" y="420"/>
<use href="#bp" x="44" y="441"/>
<use href="#ico" x="59" y="439"/>
<use href="#ico" x="59" y="458"/>
<use href="#ico" x="41" y="477"/>
<path d="M31 261h1v1h-1zM31 263h1v1h-1zM31 265h1v1h-1zM31 267h1v1h-1zM31 269h1v1h-1zM31 271h1v1h-1zM31 273h1v1h-1zM31 275h1v1h-1zM31 277h1v1h-1zM31 279h1v1h-1zM31 281h1v1h-1zM31 283h1v1h-1zM31 285h1v1h-1zM31 287h1v1h-1zM31 289h1v1h-1zM31 291h1v1h-1zM31 293h1v1h-1zM31 295h1v1h-1zM31 297h1v1h-1zM31 299h1v1h-1zM31 301h1v1h-1zM31 303h1v1h-1zM31 305h1v1h-1zM31 307h1v1h-1zM31 309h1v1h-1zM31 311h1v1h-1zM31 313h1v1h-1zM31 315h1v1h-1zM31 317h1v1h-1zM31 319h1v1h-1zM31 321h1v1h-1zM31 323h1v1h-1zM31 325h1v1h-1zM31 337h1v1h-1zM31 339h1v1h-1zM31 341h1v1h-1zM31 343h1v1h-1zM31 345h1v1h-1zM31 347h1v1h-1zM31 349h1v1h-1zM31 351h1v1h-1zM31 353h1v1h-1zM31 355h1v1h-1zM31 357h1v1h-1zM31 359h1v1h-1zM31 361h1v1h-1zM31 363h1v1h-1zM31 365h1v1h-1zM31 367h1v1h-1zM31 369h1v1h-1zM31 371h1v1h-1zM31 373h1v1h-1zM31 375h1v1h-1zM31 377h1v1h-1zM31 379h1v1h-1zM31 381h1v1h-1zM31 383h1v1h-1zM31 385h1v1h-1zM31 387h1v1h-1zM31 389h1v1h-1zM31 391h1v1h-1zM31 393h1v1h-1zM31 395h1v1h-1zM31 397h1v1h-1zM31 399h1v1h-1zM31 401h1v1h-1zM31 413h1v1h-1zM31 415h1v1h-1zM31 417h1v1h-1zM31 419h1v1h-1zM31 421h1v1h-1zM31 423h1v1h-1zM31 425h1v1h-1zM31 427h1v1h-1zM31 429h1v1h-1zM31 431h1v1h-1zM31 433h1v1h-1zM31 435h1v1h-1zM31 437h1v1h-1zM31 439h1v1h-1zM31 441h1v1h-1zM31 443h1v1h-1zM31 445h1v1h-1zM31 447h1v1h-1zM31 449h1v1h-1zM31 451h1v1h-1zM31 453h1v1h-1zM31 455h1v1h-1zM31 457h1v1h-1zM31 459h1v1h-1zM31 461h1v1h-1zM31 463h1v1h-1zM31 465h1v1h-1zM31 467h1v1h-1zM31 469h1v1h-1zM31 471h1v1h-1zM31 473h1v1h-1zM31 475h1v1h-1zM31 477h1v1h-1zM31 479h1v1h-1zM31 481h1v1h-1zM31 483h1v1h-1zM32 484h1v1h-1zM34 484h1v1h-1zM36 256h1v1h-1zM36 332h1v1h-1zM36 408h1v1h-1zM36 484h1v1h-1zM38 256h1v1h-1zM38 332h1v1h-1zM38 408h1v1h-1zM38 484h1v1h-1zM49 267h1v1h-1zM49 269h1v1h-1zM49 279h1v1h-1zM49 281h1v1h-1zM49 283h1v1h-1zM49 285h1v1h-1zM49 287h1v1h-1zM49 299h1v1h-1zM49 301h1v1h-1zM49 303h1v1h-1zM49 305h1v1h-1zM49 307h1v1h-1zM49 309h1v1h-1zM49 311h1v1h-1zM49 313h1v1h-1zM49 343h1v1h-1zM49 345h1v1h-1zM49 355h1v1h-1zM49 357h1v1h-1zM49 359h1v1h-1zM49 361h1v1h-1zM49 363h1v1h-1zM49 375h1v1h-1zM49 377h1v1h-1zM49 379h1v1h-1zM49 381h1v1h-1zM49 383h1v1h-1zM49 385h1v1h-1zM49 387h1v1h-1zM49 389h1v1h-1zM49 419h1v1h-1zM49 421h1v1h-1zM49 431h1v1h-1zM49 433h1v1h-1zM49 435h1v1h-1zM49 437h1v1h-1zM49 439h1v1h-1zM49 451h1v1h-1zM49 453h1v1h-1zM49 455h1v1h-1zM49 457h1v1h-1zM49 459h1v1h-1zM49 461h1v1h-1zM49 463h1v1h-1zM49 465h1v1h-1zM51 313h1v1h-1zM51 389h1v1h-1zM51 465h1v1h-1zM53 275h1v1h-1zM53 313h1v1h-1zM53 351h1v1h-1zM53 389h1v1h-1zM53 427h1v1h-1zM53 465h1v1h-1zM54 294h1v1h-1zM54 370h1v1h-1zM54 446h1v1h-1zM55 275h1v1h-1zM55 313h1v1h-1zM55 351h1v1h-1zM55 389h1v1h-1zM55 427h1v1h-1zM55 465h1v1h-1zM56 294h1v1h-1zM56 370h1v1h-1zM56 446h1v1h-1zM57 275h1v1h-1zM57 313h1v1h-1zM57 351h1v1h-1zM57 389h1v1h-1zM57 427h1v1h-1zM57 465h1v1h-1z" fill="#2f4f80"/>
<rect x="59.2" y="304.7" width="491.1" height="19.6" rx="30" ry="9.80" fill="none" stroke="#ff0000" stroke-width="2.4"/>
<rect x="73.2" y="378.7" width="469.0" height="19.6" rx="30" ry="9.80" fill="none" stroke="#ff0000" stroke-width="2.4"/>
<rect x="62.7" y="453.7" width="484.7" height="22.1" rx="30" ry="11.05" fill="none" stroke="#ff0000" stroke-width="2.4"/>
</svg>
</body></html>
